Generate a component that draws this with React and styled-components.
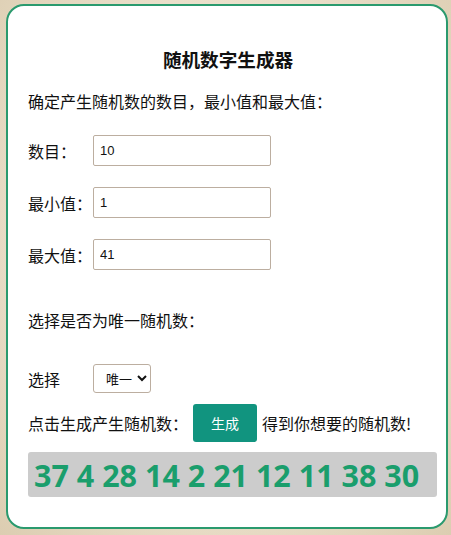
import { useState } from "react";
import styled, { createGlobalStyle } from "styled-components";

const GlobalStyle = createGlobalStyle`
  html, body {
    margin: 0;
    padding: 0;
  }
  body {
    width: 451px;
    height: 535px;
    overflow: hidden;
    font-family: "Noto Sans CJK SC", "Noto Sans", sans-serif;
    color: #111;
    background: radial-gradient(ellipse at 50% 45%, #f3ecdc 0%, #eadfca 60%, #dccdb1 100%);
  }
`;

const Page = styled.div`
  padding: 4px 3px 6px 6px;
`;

const Card = styled.div`
  box-sizing: border-box;
  width: 442px;
  height: 525px;
  background: #fff;
  border: 2px solid #2a9a6e;
  border-radius: 18px;
  padding: 39px 9px 0 20px;
  display: flex;
  flex-direction: column;
`;

const Title = styled.h1`
  margin: 0;
  font-size: 18.6px;
  line-height: 28px;
  font-weight: 700;
  text-align: center;
  padding-right: 9px;
`;

const Text = styled.p`
  margin: ${(p) => p.$top}px 0 0;
  font-size: 16px;
  line-height: 24px;
`;

const Row = styled.div`
  display: grid;
  grid-template-columns: 65px auto 1fr;
  align-items: center;
  margin-top: ${(p) => p.$top}px;
  font-size: 16px;
`;

const Field = styled.input`
  box-sizing: border-box;
  width: 178px;
  height: 31px;
  border: 1px solid #bcaea0;
  border-radius: 2px;
  padding: 0 6px;
  font-family: "Liberation Sans", Arial, sans-serif;
  font-size: 13px;
  color: #111;
  outline: none;
`;

const Select = styled.select`
  box-sizing: border-box;
  width: 58px;
  height: 29px;
  border: 1px solid #bcaea0;
  border-radius: 3px;
  background: #fff;
  font-family: "Noto Sans CJK SC", sans-serif;
  font-size: 13px;
  padding: 0 2px 0 8px;
  color: #111;
`;

const ActionRow = styled.div`
  display: flex;
  align-items: center;
  margin-top: 11px;
  font-size: 16px;
  line-height: 24px;
`;

const Button = styled.button`
  width: 64px;
  height: 38px;
  margin: 0 5px 0 5px;
  border: none;
  border-radius: 3px;
  background: #11947f;
  color: #fff;
  font-family: "Noto Sans CJK SC", sans-serif;
  font-size: 14px;
  cursor: pointer;
`;

const Result = styled.div`
  box-sizing: border-box;
  margin-top: 10px;
  width: 409px;
  height: 45px;
  background: #cccccc;
  border-radius: 3px;
  padding: 0 6px;
  display: flex;
  align-items: center;
  font-family: "Open Sans", sans-serif;
  font-weight: 700;
  font-size: 30.5px;
  color: #1a9e6c;
  white-space: nowrap;
`;

const App = () => {
  const [count, setCount] = useState("10");
  const [min, setMin] = useState("1");
  const [max, setMax] = useState("41");
  const [unique, setUnique] = useState("unique");
  const [nums, setNums] = useState([37, 4, 28, 14, 2, 21, 12, 11, 38, 30]);

  const generate = () => {
    const n = parseInt(count, 10) || 0;
    const lo = parseInt(min, 10) || 0;
    const hi = parseInt(max, 10) || 0;
    const out = [];
    while (out.length < n) {
      const v = lo + Math.floor(Math.random() * (hi - lo + 1));
      if (unique === "unique" && out.includes(v)) {
        if (hi - lo + 1 <= out.length) break;
        continue;
      }
      out.push(v);
    }
    setNums(out);
  };

  return (
    <Page>
      <GlobalStyle />
      <Card>
        <Title>随机数字生成器</Title>
        <Text $top={16}>确定产生随机数的数目，最小值和最大值：</Text>
        <Row $top={22}>
          <span>数目：</span>
          <Field value={count} onChange={(e) => setCount(e.target.value)} />
        </Row>
        <Row $top={21}>
          <span>最小值：</span>
          <Field value={min} onChange={(e) => setMin(e.target.value)} />
        </Row>
        <Row $top={21}>
          <span>最大值：</span>
          <Field value={max} onChange={(e) => setMax(e.target.value)} />
        </Row>
        <Text $top={38}>选择是否为唯一随机数：</Text>
        <Row $top={32}>
          <span>选择</span>
          <Select value={unique} onChange={(e) => setUnique(e.target.value)}>
            <option value="unique">唯一</option>
            <option value="repeat">重复</option>
          </Select>
        </Row>
        <ActionRow>
          <span>点击生成产生随机数：</span>
          <Button onClick={generate}>生成</Button>
          <span>得到你想要的随机数!</span>
        </ActionRow>
        <Result>{nums.join(" ")}</Result>
      </Card>
    </Page>
  );
};

export default App;
